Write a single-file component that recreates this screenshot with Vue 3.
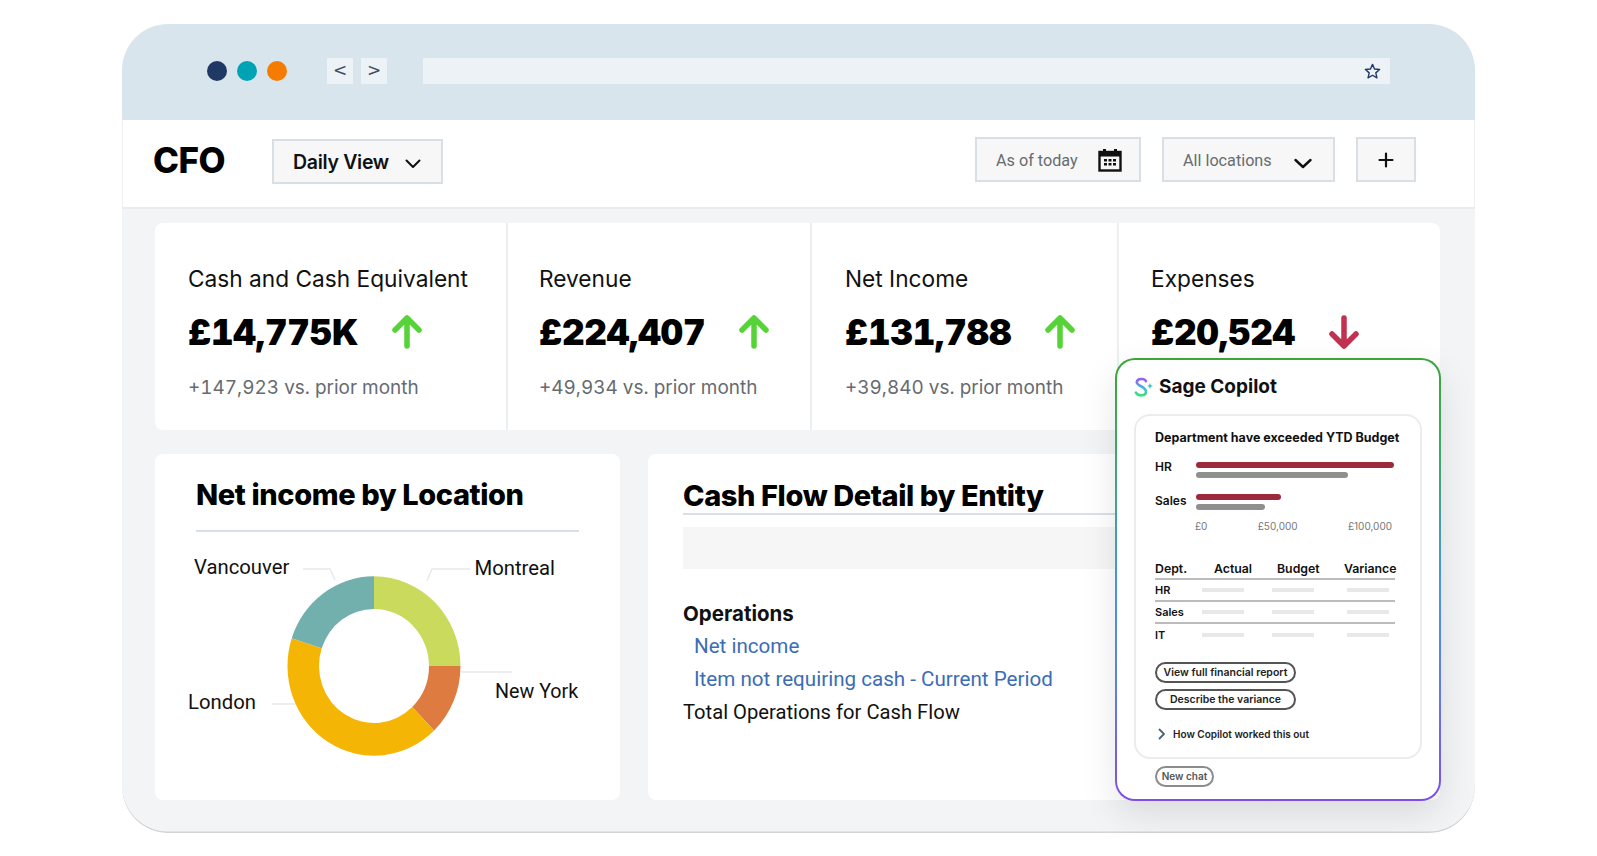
<script setup>
const kpis = [
  { label: 'Cash and Cash Equivalent', value: '£14,775K', sub: '+147,923 vs. prior month', up: true },
  { label: 'Revenue', value: '£224,407', sub: '+49,934 vs. prior month', up: true },
  { label: 'Net Income', value: '£131,788', sub: '+39,840 vs. prior month', up: true },
  { label: 'Expenses', value: '£20,524', sub: '', up: false }
]
const bars = [
  { name: 'HR', actual: 198, budget: 152 },
  { name: 'Sales', actual: 85, budget: 69 }
]
const rows = ['HR', 'Sales', 'IT']
const seg = (a0, a1, fill) => {
  const R = 86.5, r = 55, cx = 219, cy = 0
  const p = (rad, a) => {
    const t = (a * Math.PI) / 180
    return `${(cx + rad * Math.sin(t)).toFixed(2)} ${(cy - rad * Math.cos(t)).toFixed(2)}`
  }
  const large = a1 - a0 > 180 ? 1 : 0
  return { fill, d: `M${p(R, a0)} A${R} ${R} 0 ${large} 1 ${p(R, a1)} L${p(r, a1)} A${r} ${r} 0 ${large} 0 ${p(r, a0)} Z` }
}
const segments = [
  seg(0, 90, '#c9da5c'),
  seg(90, 136, '#de7b40'),
  seg(136, 288, '#f5b505'),
  seg(288, 360, '#72b0ae')
]
</script>

<template>
  <div class="page">
    <div class="frame">
      <div class="chrome">
        <div class="dots">
          <span class="dot navy"></span>
          <span class="dot teal"></span>
          <span class="dot orange"></span>
        </div>
        <div class="nav">
          <span class="navbtn">&lt;</span>
          <span class="navbtn">&gt;</span>
        </div>
        <div class="url">
          <svg width="17" height="17" viewBox="0 0 16 16" class="star">
            <path d="M8 1.3l1.9 4.4 4.8.4-3.6 3.2 1.1 4.7L8 11.5 3.8 14l1.1-4.7L1.3 6.100l4.8-.4z" fill="none" stroke="#1f3864" stroke-width="1.300" stroke-linejoin="round" />
          </svg>
        </div>
      </div>

      <header class="header">
        <div class="cfo">CFO</div>
        <div class="box daily">
          <span>Daily View</span>
          <svg width="16" height="10" viewBox="0 0 16 10"><path d="M1.500 1.500L8 8l6.500-6.500" fill="none" stroke="#111" stroke-width="2" stroke-linecap="round" stroke-linejoin="round" /></svg>
        </div>
        <div class="tools">
          <div class="box tool asof">
            <span>As of today</span>
            <svg width="24" height="24" viewBox="0 0 24 24">
              <rect x="1.500" y="4" width="21" height="18.500" fill="none" stroke="#111" stroke-width="2.400" />
              <rect x="1" y="4" width="22" height="4.500" fill="#111" />
              <rect x="5" y="1" width="3" height="5" fill="#111" />
              <rect x="16" y="1" width="3" height="5" fill="#111" />
              <path d="M6 11h3v2.500H6zM10.500 11h3v2.500h-3zM15 11h3v2.500h-3zM6 15h3v2.500H6zM10.500 15h3v2.500h-3zM15 15h3v2.500h-3z" fill="#111" />
            </svg>
          </div>
          <div class="box tool loc">
            <span>All locations</span>
            <svg width="18" height="11" viewBox="0 0 18 11"><path d="M1.500 2L9 9l7.500-7" fill="none" stroke="#111" stroke-width="2.400" stroke-linecap="round" stroke-linejoin="round" /></svg>
          </div>
          <div class="box tool plus">
            <svg width="16" height="16" viewBox="0 0 16 16"><path d="M8 1.500v13M1.500 8h13" stroke="#111" stroke-width="2.200" stroke-linecap="round" /></svg>
          </div>
        </div>
      </header>

      <main class="main">
        <section class="kpis">
          <div v-for="k in kpis" :key="k.label" class="kpi">
            <div class="kpi-label">{{ k.label }}</div>
            <div class="kpi-row">
              <span class="kpi-value">{{ k.value }}</span>
              <svg width="30" height="34" viewBox="0 0 30 34">
                <path v-if="k.up" d="M15 31V4M3 15L15 3l12 12" fill="none" stroke="#56d437" stroke-width="5.500" stroke-linecap="round" stroke-linejoin="round" />
                <path v-else d="M15 3v27M3 19l12 12 12-12" fill="none" stroke="#c0324f" stroke-width="5.500" stroke-linecap="round" stroke-linejoin="round" />
              </svg>
            </div>
            <div class="kpi-sub">{{ k.sub }}</div>
          </div>
        </section>

        <section class="panels">
          <div class="panel left">
            <h2 class="ptitle">Net income by Location</h2>
            <svg class="chart" width="460" height="240" viewBox="0 0 460 240">
              <g fill="none" stroke="#e6eaee" stroke-width="1.500">
                <path d="M148 21h27l5 11" />
                <path d="M315 21h-38l-5 12" />
                <path d="M306 124h51" />
                <path d="M117 156h29" />
              </g>
              <g transform="translate(0 118) scale(1 1.037)">
                <path v-for="s in segments" :key="s.fill" :d="s.d" :fill="s.fill" />
              </g>
              <g class="chart-label">
                <text x="39" y="26">Vancouver</text>
                <text x="319.500" y="27">Montreal</text>
                <text x="340" y="150" class="ny">New York</text>
                <text x="33" y="161">London</text>
              </g>
            </svg>
          </div>
          <div class="panel right">
            <h2 class="rtitle">Cash Flow Detail by Entity</h2>
            <div class="greybar"></div>
            <div class="op-head">Operations</div>
            <div class="op-link">Net income</div>
            <div class="op-link">Item not requiring cash - Current Period</div>
            <div class="op-total">Total Operations for Cash Flow</div>
          </div>
        </section>

        <aside class="copilot">
          <div class="co-head">
            <svg width="20" height="20" viewBox="0 0 20 20">
              <defs>
                <linearGradient id="sg" x1="0" y1="0" x2="0" y2="1">
                  <stop offset="0" stop-color="#9a5cf0" />
                  <stop offset="0.5" stop-color="#3fb6e8" />
                  <stop offset="1" stop-color="#3fe07a" />
                </linearGradient>
              </defs>
              <path d="M12 4.200C10.800 1.400 3.500 .8 2.800 5c-.5 4 9.200 4.500 9.200 9.500 0 4.800-7.500 5-10 1.200" fill="none" stroke="url(#sg)" stroke-width="2.600" stroke-linecap="round" />
              <path d="M16 6l.8 2.200 2.200.8-2.200.8L16 12l-.8-2.200-2.200-.8 2.200-.8z" fill="#2fc0b0" />
            </svg>
            <span>Sage Copilot</span>
          </div>
          <div class="co-card">
            <div class="co-title">Department have exceeded YTD Budget</div>
            <div class="co-bars">
              <div v-for="b in bars" :key="b.name" class="co-bar-row">
                <span class="co-name">{{ b.name }}</span>
                <div class="co-bar-stack">
                  <span class="bar red" :style="{ width: b.actual + 'px' }"></span>
                  <span class="bar grey" :style="{ width: b.budget + 'px' }"></span>
                </div>
              </div>
            </div>
            <div class="axis">
              <span>£0</span><span>£50,000</span><span>£100,000</span>
            </div>
            <div class="thead">
              <span>Dept.</span><span>Actual</span><span>Budget</span><span>Variance</span>
            </div>
            <div v-for="(r, i) in rows" :key="r" class="trow" :class="{ last: i === 2 }">
              <span class="tname">{{ r }}</span>
              <i class="sk"></i><i class="sk"></i><i class="sk"></i>
            </div>
            <div class="pills">
              <span class="pill">View full financial report</span>
              <span class="pill">Describe the variance</span>
            </div>
            <div class="how">
              <svg width="8" height="12" viewBox="0 0 8 12"><path d="M1.500 1.500L6 6l-4.500 4.500" fill="none" stroke="#4a6478" stroke-width="1.800" stroke-linecap="round" stroke-linejoin="round" /></svg>
              <span>How Copilot worked this out</span>
            </div>
          </div>
          <span class="newchat">New chat</span>
        </aside>
      </main>
    </div>
  </div>
</template>

<style>
html, body { margin: 0; background: #fff; overflow: hidden; }
</style>

<style scoped>
.page {
  width: 1597px;
  height: 856px;
  box-sizing: border-box;
  padding: 24px 0 0 122px;
  font-family: Inter, "Noto Sans", sans-serif;
  color: #111;
}
.frame {
  width: 1353px;
  height: 809px;
  border-radius: 46px;
  overflow: hidden;
  background: #fff;
  display: flex;
  flex-direction: column;
}
.chrome {
  height: 96px;
  flex: none;
  background: #d9e5ed;
  display: flex;
  align-items: center;
  box-sizing: border-box;
  padding: 0 0 2px 85px;
}
.dots { display: flex; gap: 10px; }
.dot { width: 20px; height: 20px; border-radius: 50%; }
.navy { background: #1f3864; }
.teal { background: #00a3b5; }
.orange { background: #f57c00; }
.nav { display: flex; gap: 8px; margin-left: 40px; }
.navbtn {
  width: 26px;
  height: 26px;
  background: #edf2f6;
  color: #3b4f6b;
  font: 17px/25px "DejaVu Sans", sans-serif;
  text-align: center;
}
.url {
  width: 967px;
  height: 26px;
  margin-left: 36px;
  background: #edf2f6;
  display: flex;
  align-items: center;
  justify-content: flex-end;
  padding-right: 9px;
  box-sizing: border-box;
}
.header {
  height: 89px;
  flex: none;
  background: #fff;
  border-bottom: 2px solid #e9ecef;
  box-shadow: inset 1px 0 0 #f0f1f3, inset -1px 0 0 #eceef0;
  box-sizing: border-box;
  display: flex;
  align-items: flex-start;
  padding-left: 31px;
}
.cfo {
  font-size: 35px;
  font-weight: 800;
  line-height: 44px;
  margin-top: 18px;
  width: 119px;
  letter-spacing: -0.5px;
  color: #000;
}
.box {
  background: #f7f7f7;
  border: 2px solid #d9e0e5;
  box-sizing: border-box;
  height: 45px;
  display: flex;
  align-items: center;
}
.daily {
  width: 171px;
  margin-top: 19px;
  padding-left: 19px;
  gap: 16px;
  font-size: 19.500px;
  font-weight: 600;
  letter-spacing: -0.3px;
}
.daily svg { margin-top: 4px; }
.tools {
  margin-left: auto;
  padding: 17px 59px 0 0;
  display: flex;
  gap: 21px;
}
.tool { color: #666c70; font-family: Roboto, sans-serif; font-size: 16.200px; }
.tool span { margin-top: 2px; }
.asof { width: 166px; padding-left: 19px; justify-content: flex-start; gap: 20px; }
.loc { width: 173px; padding-left: 19px; gap: 22px; }
.loc svg { margin-top: 7px; }
.plus { width: 60px; justify-content: center; }
.main {
  flex: 1;
  background: #f3f4f6;
  padding: 14px 35px 0 33px;
  position: relative;
  display: flex;
  flex-direction: column;
  gap: 24px;
  box-shadow: inset 0 -1.500px 0 #d2d4d6;
  border-bottom-left-radius: 46px;
  border-bottom-right-radius: 46px;
}
.kpis {
  height: 207px;
  display: grid;
  grid-template-columns: 351px 304px 307px 323px;
  background: #fff;
  border-radius: 8px;
}
.kpi {
  padding: 42px 0 0 31px;
  box-sizing: border-box;
  border-left: 2px solid #eceff2;
}
.kpi:first-child { border-left: 0; padding-left: 33px; }
.kpi:nth-child(3) { padding-left: 33px; }
.kpi:nth-child(4) { padding-left: 32px; }
.kpi-label { font-size: 22.700px; line-height: 28px; color: #111; }
.kpi-row {
  display: flex;
  align-items: center;
  gap: 34px;
  margin-top: 17px;
  height: 44px;
}
.kpi-value {
  font-size: 35px;
  font-weight: 900;
  line-height: 44px;
  color: #000;
  letter-spacing: -0.2px;
  font-variant-numeric: tabular-nums;
}
.kpi-sub { font-size: 18.950px; line-height: 26px; color: #666b70; margin-top: 21px; font-variant-numeric: tabular-nums; }
.panels { display: flex; gap: 28px; height: 346px; }
.panel { background: #fff; border-radius: 8px; box-sizing: border-box; }
.left { width: 465px; padding: 0 41px 0 41px; }
.ptitle {
  margin: 0;
  font-size: 29px;
  line-height: 36px;
  font-weight: 800;
  color: #000;
  letter-spacing: -0.4px;
  padding: 23px 0 17px;
  border-bottom: 2px solid #d9e0e6;
}
.chart { display: block; margin: 16px 0 0 -41px; }
.chart-label text { font-family: Roboto, sans-serif; font-size: 20.300px; fill: #111; }
.chart-label .ny { font-size: 19.700px; }
.right { flex: 1; padding: 0 0 0 35px; overflow: hidden; }
.rtitle {
  margin: 0;
  font-size: 29px;
  line-height: 36px;
  font-weight: 800;
  color: #000;
  letter-spacing: -0.4px;
  padding: 24px 0 0;
  height: 61px;
  box-sizing: border-box;
  border-bottom: 2px solid #d9e0e6;
}
.greybar { height: 42px; background: #f6f6f6; margin-top: 12px; }
.op-head { font-size: 20.500px; font-weight: 700; line-height: 32px; margin-top: 29px; color: #111; }
.op-link { font-family: Roboto, sans-serif; font-size: 20.600px; line-height: 33px; color: #3b6db5; padding-left: 11px; }
.op-total { font-family: Roboto, sans-serif; font-size: 20.200px; line-height: 32px; color: #111; }
.copilot {
  position: absolute;
  left: 993px;
  top: 149px;
  width: 326px;
  height: 443px;
  box-sizing: border-box;
  border: 2px solid transparent;
  border-radius: 20px;
  background:
    linear-gradient(#fff, #fff) padding-box,
    linear-gradient(180deg, #3aa53a 0%, #3fa86a 22%, #4a94dc 52%, #5f7fe4 72%, #7d4fe6 100%) border-box;
  box-shadow: 0 14px 36px rgba(0, 0, 0, 0.1);
  padding: 0 17px;
}
.co-head {
  display: flex;
  align-items: center;
  gap: 5px;
  height: 54px;
  font-size: 19px;
  font-weight: 700;
  color: #111;
  padding-bottom: 1px;
  box-sizing: border-box;
}
.co-card {
  width: 288px;
  height: 345px;
  box-sizing: border-box;
  border: 2px solid #ececec;
  border-radius: 16px;
  padding: 13px 0 0 19px;
}
.co-title { font-size: 12.500px; font-weight: 700; line-height: 18px; white-space: nowrap; }
.co-bars { margin-top: 15px; display: flex; flex-direction: column; gap: 16px; }
.co-bar-row { display: flex; height: 16px; }
.co-name { width: 41px; font-size: 12px; font-weight: 600; line-height: 16px; margin-top: -3px; }
.co-bar-row:last-child .co-name { margin-top: -1px; }
.co-bar-stack { display: flex; flex-direction: column; gap: 4px; }
.bar { display: block; height: 6px; border-radius: 3px; }
.red { background: #9c2a3d; }
.grey { background: #8f8f8f; }
.axis {
  margin: 9px 0 0 40px;
  width: 197px;
  display: flex;
  justify-content: space-between;
  font-size: 10px;
  line-height: 14px;
  color: #777;
}
.thead {
  margin-top: 27px;
  width: 240px;
  display: grid;
  grid-template-columns: 59px 63px 67px 49px;
  font-size: 12.300px;
  font-weight: 600;
  line-height: 18px;
  border-bottom: 2px solid #bcbcbc;
  white-space: nowrap;
}
.trow {
  width: 240px;
  height: 22px;
  display: grid;
  grid-template-columns: 47px 70px 75px 42px;
  align-items: center;
  box-sizing: border-box;
  border-bottom: 2px solid #bcbcbc;
}
.trow.last { border-bottom: 0; }
.tname { font-size: 11px; font-weight: 600; }
.sk { display: block; width: 42px; height: 4px; background: #e8e8e8; }
.pills { display: flex; flex-direction: column; gap: 6px; margin-top: 16px; width: 141px; }
.pill {
  height: 21px;
  box-sizing: border-box;
  border: 2px solid #555;
  border-radius: 11px;
  font-size: 10.500px;
  font-weight: 600;
  line-height: 17px;
  text-align: center;
  white-space: nowrap;
  color: #222;
}
.how {
  display: flex;
  align-items: center;
  gap: 7px;
  margin: 15px 0 0 3px;
  font-size: 10px;
  font-weight: 600;
  line-height: 18px;
  color: #222;
}
.newchat {
  display: block;
  width: 59px;
  height: 21px;
  box-sizing: border-box;
  margin: 7px 0 0 21px;
  border: 2px solid #8c8c8c;
  border-radius: 11px;
  font-size: 10px;
  font-weight: 600;
  line-height: 17px;
  text-align: center;
  color: #555;
}
</style>
